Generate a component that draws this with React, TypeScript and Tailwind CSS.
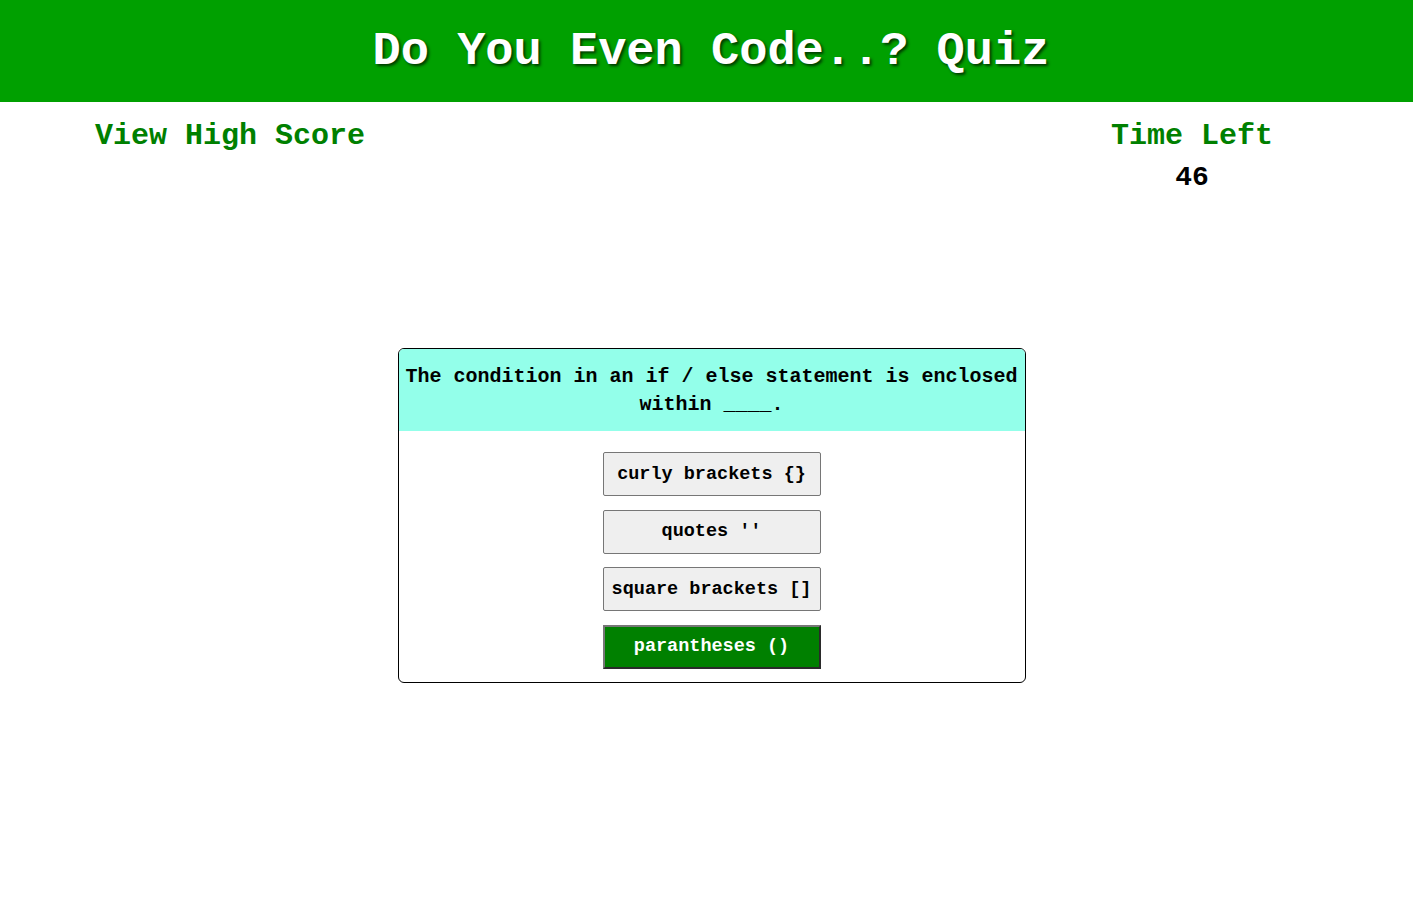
import React from "react";

const mono = { fontFamily: '"Liberation Mono", "Courier New", monospace' };

export default function App() {
  const answers = ["curly brackets {}", "quotes ''", "square brackets []", "parantheses ()"];
  return (
    <div className="min-h-[923px] bg-white font-['Liberation_Mono',monospace]" style={mono}>
      <header className="h-[102px] bg-[#00a000] flex items-center justify-center pl-[9px]">
        <h1 className="text-[47px] font-bold text-white leading-none [text-shadow:2px_2px_3px_rgba(0,0,0,0.65)]">
          Do You Even Code..? Quiz
        </h1>
      </header>

      <div className="flex justify-between items-start pl-[95px] pr-[140px] pt-[17px]">
        <div className="text-[30px] font-bold text-[#008000] leading-[34px]">View High Score</div>
        <div className="flex flex-col items-center">
          <div className="text-[30px] font-bold text-[#008000] leading-[34px]">Time Left</div>
          <div className="text-[28px] font-bold text-black leading-[32px] mt-[9px]">46</div>
        </div>
      </div>

      <div className="flex justify-center pl-[10px] mt-[154px]">
        <div className="w-[628px] border border-black rounded-[6px] overflow-hidden">
          <div className="bg-[#93ffea] px-[6px] pt-[14px] pb-[12px] text-center text-[20px] font-bold leading-[28px] text-black">
            The condition in an if / else statement is enclosed within ____.
          </div>
          <div className="flex flex-col items-center gap-[13.5px] pt-[21px] pb-[13px]">
            {answers.map((a, i) =>
              i === 3 ? (
                <button
                  key={a}
                  className="w-[218px] h-[44px] bg-[#008000] text-white text-[18.5px] font-bold border-2 border-t-[#777] border-l-[#777] border-r-[#2a2a2a] border-b-[#2a2a2a]"
                  style={mono}
                >
                  {a}
                </button>
              ) : (
                <button
                  key={a}
                  className="w-[218px] h-[44px] bg-[#efefef] text-black text-[18.5px] font-bold border border-[#767676] rounded-[2px] pt-[1px]"
                  style={mono}
                >
                  {a}
                </button>
              )
            )}
          </div>
        </div>
      </div>
    </div>
  );
}
